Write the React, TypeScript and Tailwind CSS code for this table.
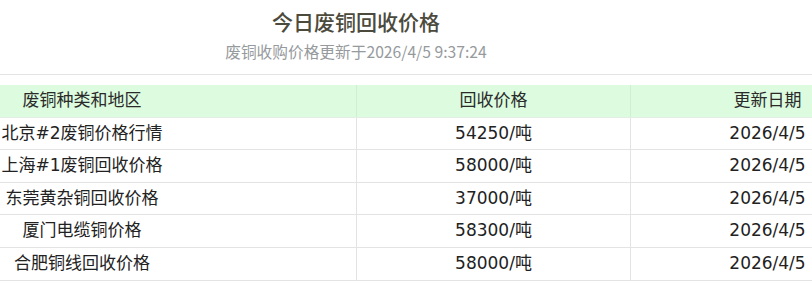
import React from "react";

const rows = [
  { name: "北京#2废铜价格行情", price: "54250/吨", date: "2026/4/5" },
  { name: "上海#1废铜回收价格", price: "58000/吨", date: "2026/4/5" },
  { name: "东莞黄杂铜回收价格", price: "37000/吨", date: "2026/4/5" },
  { name: "厦门电缆铜价格", price: "58300/吨", date: "2026/4/5" },
  { name: "合肥铜线回收价格", price: "58000/吨", date: "2026/4/5" },
];

export default function App() {
  return (
    <div className="w-[812px] h-[284px] overflow-hidden bg-white">
      <div className="w-[712px] flex flex-col items-center">
        <h1
          className="mt-[6px] h-[30px] leading-[30px] text-[21px] font-medium text-[#4b4a3c]"
          style={{ fontFamily: '"Noto Sans CJK SC", serif' }}
        >
          今日废铜回收价格
        </h1>
        <div
          className="mt-[6px] h-[20px] leading-[20px] text-[15.7px] text-[#969a9d]"
          style={{ fontFamily: '"Noto Sans CJK SC", sans-serif' }}
        >
          废铜收购价格更新于2026/4/5 9:37:24
        </div>
        <div
          className="mt-[12px] w-[1096px] shrink-0 border-t border-[#e3e3e3] pt-[10px] text-[17px] text-[#222]"
          style={{ fontFamily: '"DejaVu Sans", "Noto Sans CJK SC", sans-serif' }}
        >
          <div className="grid grid-cols-[548px_274px_274px] h-[32.6px] bg-[#dcfbdf] text-[#2a2a2a] border-b border-[#e3eee4]">
            <div className="flex items-center justify-center">废铜种类和地区</div>
            <div className="flex items-center justify-center border-l border-[#d2ecd5]">回收价格</div>
            <div className="flex items-center justify-center border-l border-[#d2ecd5]">更新日期</div>
          </div>
          {rows.map((r) => (
            <div
              key={r.name}
              className="grid grid-cols-[548px_274px_274px] h-[32.6px] border-b border-[#e3e3e3]"
            >
              <div className="flex items-center justify-center">{r.name}</div>
              <div className="flex items-center justify-center border-l border-[#e3e3e3]">{r.price}</div>
              <div className="flex items-center justify-center border-l border-[#e3e3e3]">{r.date}</div>
            </div>
          ))}
        </div>
      </div>
    </div>
  );
}
